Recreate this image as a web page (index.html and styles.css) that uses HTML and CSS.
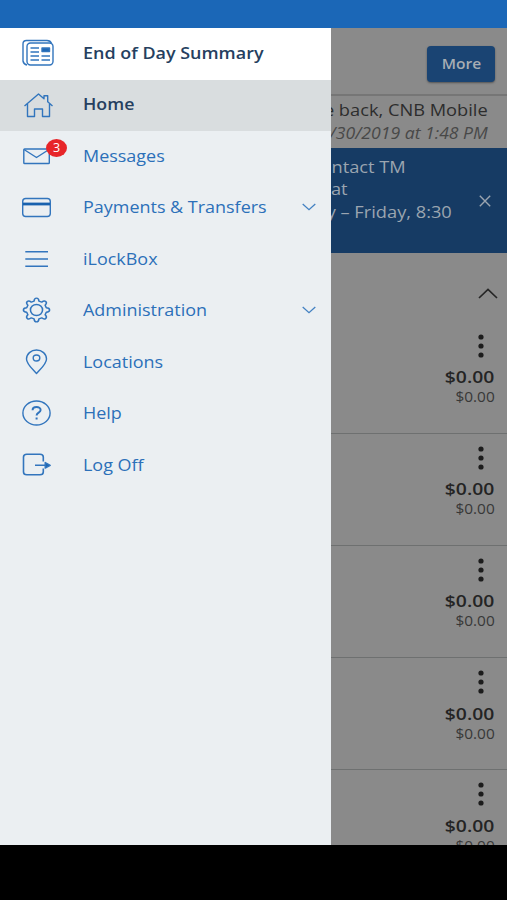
FILE: index.html
```
<!DOCTYPE html>
<html lang="en">
<head>
<meta charset="utf-8">
<title>Mobile Banking</title>
<link rel="stylesheet" href="styles.css">
</head>
<body>
<div class="status-bar"></div>
<div class="screen">
  <nav class="drawer">
    <a class="item summary">
      <svg class="icon" viewBox="0 0 44 44"><path d="M13 35a5 5 0 0 1-4-4V14q0-3.500 3.500-3.500H33q3.500 0 4.500 3"/><rect x="13" y="13" width="26" height="22" rx="3.500"/><path d="M16.500 18h8.500M16.500 22h8.500M16.500 26h8.500M16.500 30h8.500M27.500 26h8.500M27.500 30h8.500"/><path class="solid" d="M28 18h7.500v3.500H28z"/></svg>
      <span class="label">End of Day Summary</span>
    </a>
    <a class="item current">
      <svg class="icon" viewBox="0 0 44 44"><path d="M10.500 24 24.500 12l5.500 4.700v-2.900h3.700v6L38.500 24M13.500 22V34.500h7V27h8v7.500h7V22"/></svg>
      <span class="label">Home</span>
    </a>
    <a class="item">
      <svg class="icon" viewBox="0 0 44 44"><rect x="9.800" y="15" width="25.500" height="14.500" rx=".8"/><path d="m10 15.500 12.500 8 12.500-8"/></svg>
      <span class="badge">3</span>
      <span class="label">Messages</span>
    </a>
    <a class="item">
      <svg class="icon" viewBox="0 0 44 44"><rect x="8.700" y="13.500" width="27.600" height="18" rx="3"/><path class="stripe" d="M9 19h27"/></svg>
      <span class="label">Payments &amp; Transfers</span>
      <svg class="chevron" viewBox="0 0 14 8"><path d="m.7 1 6.300 5.700L13.300 1"/></svg>
    </a>
    <a class="item">
      <svg class="icon" viewBox="0 0 44 44"><path class="heavy" d="M11.300 14.700H34M11.300 22H34M11.300 29.300H34"/></svg>
      <span class="label">iLockBox</span>
    </a>
    <a class="item">
      <svg class="icon" viewBox="0 0 44 44"><g transform="translate(22.500 22) scale(1.100 1)"><circle r="5.500"/><path d="M-2.200-8.900C-2-12.900 2-12.900 2.200-8.900L4.740-7.850C7.710-10.530 10.530-7.710 7.850-4.740L8.900-2.200C12.900-2 12.900 2 8.900 2.200L7.850 4.740C10.530 7.710 7.710 10.530 4.740 7.850L2.200 8.900C2 12.900-2 12.900-2.200 8.900L-4.740 7.850C-7.710 10.530-10.530 7.710-7.850 4.740L-8.900 2.200C-12.900 2-12.900-2-8.900-2.200L-7.850-4.740C-10.530-7.710-7.710-10.530-4.740-7.850z"/></g></svg>
      <span class="label">Administration</span>
      <svg class="chevron" viewBox="0 0 14 8"><path d="m.7 1 6.300 5.700L13.300 1"/></svg>
    </a>
    <a class="item">
      <svg class="icon" viewBox="0 0 44 44"><path d="M22.500 33.500C18 28.500 12.500 24 12.500 19a10 9 0 0 1 20 0c0 5-5.500 9.500-10 14.500z"/><ellipse cx="22.500" cy="18" rx="3.300" ry="3"/></svg>
      <span class="label">Locations</span>
    </a>
    <a class="item">
      <svg class="icon" viewBox="0 0 44 44"><ellipse cx="22.500" cy="22" rx="13.600" ry="12"/><path class="mark" d="M18.600 19.200c0-4.200 8-4.200 8-.2 0 2.800-4 2.600-4 5.500M22.600 26.600v1.900"/></svg>
      <span class="label">Help</span>
    </a>
    <a class="item">
      <svg class="icon" viewBox="0 0 44 44"><path class="heavy" d="M29.300 18.500V14q0-2.800-3.300-2.800H12.800q-3.300 0-3.300 2.800v15q0 2.800 3.300 2.800H26q3.300 0 3.300-2.800v-3.500M21 22.300h11"/><path class="solid" d="m31.200 19.500 5 2.800-5 2.800z"/></svg>
      <span class="label">Log Off</span>
    </a>
  </nav>
  <main class="page">
    <header class="toolbar"><button class="more"><span>More</span></button></header>
    <div class="welcome">
      <p class="line greeting">e back, CNB Mobile</p>
      <p class="line last-login">/30/2019 at 1:48 PM</p>
    </div>
    <section class="notice">
      <div class="notice-text">
        <p class="line first">ontact TM</p>
        <p class="line second">at</p>
        <p class="line third">y – Friday, 8:30</p>
      </div>
      <svg class="close" viewBox="0 0 12 12"><path d="m.8.800 10.400 10.400M11.200.800.800 11.200"/></svg>
    </section>
    <div class="group"><svg class="collapse" viewBox="0 0 20 11"><path d="m1 10 9-8.500L19 10"/></svg></div>
    <section class="account"><svg class="dots" viewBox="0 0 6 24"><circle cx="3" cy="3" r="2.600"/><circle cx="3" cy="12" r="2.600"/><circle cx="3" cy="21" r="2.600"/></svg><p class="line balance">$0.00</p><p class="line available">$0.00</p></section>
    <section class="account"><svg class="dots" viewBox="0 0 6 24"><circle cx="3" cy="3" r="2.600"/><circle cx="3" cy="12" r="2.600"/><circle cx="3" cy="21" r="2.600"/></svg><p class="line balance">$0.00</p><p class="line available">$0.00</p></section>
    <section class="account"><svg class="dots" viewBox="0 0 6 24"><circle cx="3" cy="3" r="2.600"/><circle cx="3" cy="12" r="2.600"/><circle cx="3" cy="21" r="2.600"/></svg><p class="line balance">$0.00</p><p class="line available">$0.00</p></section>
    <section class="account"><svg class="dots" viewBox="0 0 6 24"><circle cx="3" cy="3" r="2.600"/><circle cx="3" cy="12" r="2.600"/><circle cx="3" cy="21" r="2.600"/></svg><p class="line balance">$0.00</p><p class="line available">$0.00</p></section>
    <section class="account"><svg class="dots" viewBox="0 0 6 24"><circle cx="3" cy="3" r="2.600"/><circle cx="3" cy="12" r="2.600"/><circle cx="3" cy="21" r="2.600"/></svg><p class="line balance">$0.00</p><p class="line available">$0.00</p></section>
  </main>
</div>
</body>
</html>
```
FILE: styles.css
```
* { box-sizing: border-box; }
body {
  margin: 0;
  height: 900px;
  overflow: hidden;
  background: #000;
  font-family: "Open Sans", sans-serif;
}
p { margin: 0; }
svg { display: block; fill: none; flex: none; }
.status-bar { height: 28px; background: #1b67b7; }
.screen { display: flex; height: 817px; overflow: hidden; }

.drawer { width: 331px; flex: none; background: #ebeff2; }
.item {
  position: relative;
  display: flex;
  align-items: center;
  height: 51.500px;
  padding: 0 15px 2px 14px;
  color: #2c70b9;
  font-size: 16px;
}
.summary { background: #fff; color: #263f60; font-weight: 600; }
.current { background: #d9dddf; color: #263f60; font-weight: 600; }
.icon { width: 44px; height: 44px; stroke: #3275bd; stroke-width: 1.400; stroke-linejoin: round; }
.summary .icon { margin-top: -1px; }
.icon .solid { fill: #1e67b5; }
.icon .stripe { stroke: #1861ae; stroke-width: 2.800; }
.icon .heavy { stroke-width: 1.600; }
.icon .mark { stroke-width: 2; }
.label { margin-left: 25px; white-space: nowrap; transform: scaleX(1.122); transform-origin: left; }
.current .label { transform: scaleX(1.110); }
.chevron { width: 14px; height: 8px; margin-left: auto; stroke: #4381c2; stroke-width: 1.300; }
.badge {
  position: absolute;
  left: 46px;
  top: 8px;
  width: 21px;
  height: 18px;
  border-radius: 50%;
  background: #e72529;
  color: #fff;
  font-size: 12.500px;
  line-height: 18px;
  text-align: center;
}

.page { flex: none; width: 176px; overflow: hidden; background: #8a8a8a; color: #2d2d2d; }
.toolbar {
  display: flex;
  justify-content: flex-end;
  height: 68px;
  padding: 18px 12px 0 0;
  border-bottom: 2px solid #767676;
}
.more {
  width: 68px;
  height: 36px;
  padding: 0;
  border: 0;
  border-radius: 4px;
  background: #1a4473;
  box-shadow: 0 1px 2px #555;
  color: #a7adb3;
  font: 600 14.500px/34px "Open Sans", sans-serif;
}
.more span { display: inline-block; transform: scaleX(1.070); }
.line { width: max-content; white-space: nowrap; transform: scaleX(1.14); transform-origin: right; }
.welcome { display: flex; flex-direction: column; align-items: flex-end; height: 52px; padding: 3px 19px 0 0; }
.greeting { font-size: 16px; line-height: 23px; }
.last-login { font-size: 16px; line-height: 22px; font-style: italic; color: #484848; transform: scaleX(1.100); }
.notice { display: flex; height: 105px; background: #163b64; color: #9ba5b0; font-size: 16px; line-height: 22.500px; }
.notice-text { display: flex; flex-direction: column; align-items: flex-end; width: 121px; padding-top: 7.500px; }
.notice .first { margin-right: 46px; }
.notice .second { margin-right: 104px; }
.close { width: 12px; height: 12px; margin: 47px 0 0 27px; stroke: #9ba5b0; stroke-width: 1.400; }
.group { display: flex; justify-content: flex-end; height: 68.500px; padding: 35px 9px 0 0; }
.collapse { width: 20px; height: 11px; stroke: #262626; stroke-width: 1.700; }
.account {
  display: flex;
  flex-direction: column;
  align-items: flex-end;
  height: 112.200px;
  padding: 12px 12.500px 0 0;
  border-bottom: 1px solid #6e7070;
}
.dots { width: 6px; height: 24px; margin-right: 11px; fill: #1c1c1c; }
.balance { margin-top: 7.500px; font-size: 16.500px; line-height: 24px; font-weight: 600; color: #242424; transform: scaleX(1.170); }
.available { font-size: 14px; line-height: 15px; color: #383838; transform: scaleX(1.100); }
```
